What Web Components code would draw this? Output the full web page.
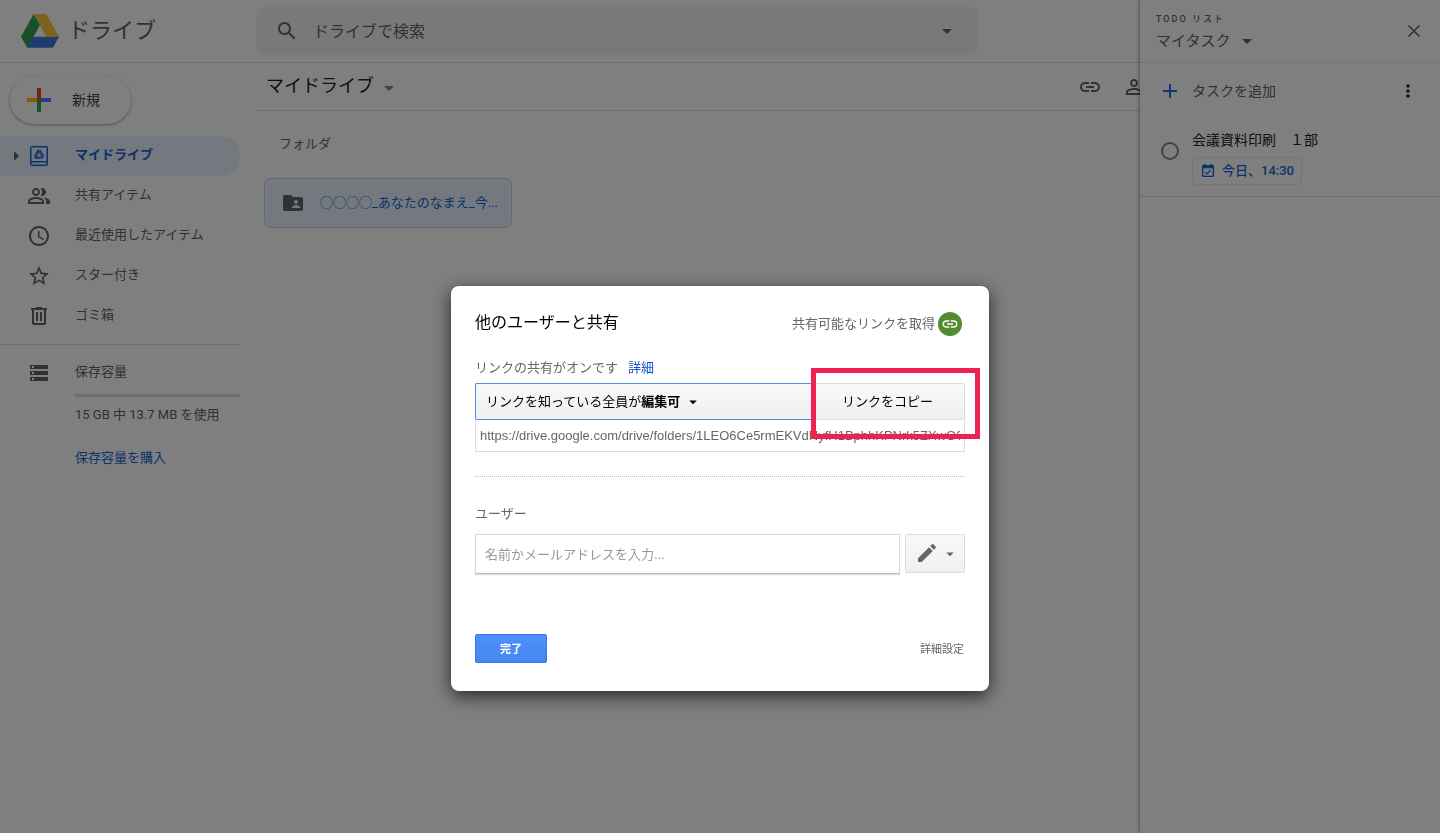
<!DOCTYPE html>
<html lang="ja">
<head>
<meta charset="utf-8">
<title>マイドライブ</title>
<style>
html, body { margin: 0; min-height: 100%; }
body { font-family: Roboto, "Noto Sans CJK JP", sans-serif; font-size: 13px; line-height: 20px; color: #5f6368; background: #fff; }
</style>
</head>
<body>
<drive-app></drive-app>
<script>
const RESET = `
  *, *::before, *::after { box-sizing: border-box; }
  :host { display: block; box-sizing: border-box; }
  button, input { font: inherit; color: inherit; background: none; border: 0; margin: 0; padding: 0; border-radius: 0; outline: 0; }
  button { cursor: pointer; }
  a { color: inherit; text-decoration: none; }
  h1, h2, h3, p, ul { margin: 0; padding: 0; font-size: inherit; font-weight: 400; list-style: none; }
`;

function define(name, html, setup) {
  const template = document.createElement('template');
  template.innerHTML = html.replace('<style>', '<style>' + RESET);
  customElements.define(name, class extends HTMLElement {
    constructor() {
      super();
      this.attachShadow({ mode: 'open' }).append(template.content.cloneNode(true));
      if (setup) setup(this.shadowRoot, this);
    }
  });
}

const ICONS = {
  search: '<path d="M15.5 14h-.79l-.28-.27C15.41 12.59 16 11.11 16 9.5 16 5.91 13.09 3 9.5 3S3 5.91 3 9.5 5.91 16 9.5 16c1.61 0 3.09-.59 4.23-1.57l.27.28v.79l5 4.99L20.49 19l-4.99-5zm-6 0C7.01 14 5 11.99 5 9.5S7.01 5 9.5 5 14 7.01 14 9.5 11.99 14 9.5 14z"/>',
  down: '<path d="M7 10l5 5 5-5z"/>',
  right: '<path d="M10 7l5 5-5 5z"/>',
  drive: '<path fill-rule="evenodd" d="M5 2h14a2 2 0 0 1 2 2v16a2 2 0 0 1-2 2H5a2 2 0 0 1-2-2V4a2 2 0 0 1 2-2zM4.500 3.500v13.500h15V3.500zM4.500 18.500v2h15v-2z"/><path fill-rule="evenodd" d="M10.400 5.800h3.200l3.600 6.400-1.600 2.800H8.400l-1.600-2.800zM12 8.600l-2.100 3.800h4.200z"/><path d="M11.700 6.200l4.300 7.400M10.600 8.600l-2.700 4.800M9.800 13.900h6" fill="none" stroke="#e8f0fe" stroke-width=".6"/>',
  people: '<path d="M16.500 13.130C17.970 14.140 19 15.500 19 17.300V20h4v-2.700c0-2.180-3.570-3.470-6.500-4.170zM15 12c2.210 0 4-1.790 4-4s-1.790-4-4-4c-.47 0-.91.100-1.330.240C14.500 5.270 15 6.580 15 8s-.5 2.730-1.330 3.760c.42.140.860.240 1.330.240zM9 12c2.210 0 4-1.790 4-4s-1.790-4-4-4-4 1.790-4 4 1.790 4 4 4zm0-6c1.100 0 2 .9 2 2s-.9 2-2 2-2-.9-2-2 .9-2 2-2zM9 13c-2.670 0-8 1.340-8 4v3h16v-3c0-2.660-5.330-4-8-4zm6 5H3v-.99C3.200 16.290 6.300 15 9 15s5.800 1.290 6 2v1z"/>',
  clock: '<path d="M11.990 2C6.470 2 2 6.480 2 12s4.470 10 9.990 10C17.520 22 22 17.520 22 12S17.520 2 11.990 2zM12 20c-4.420 0-8-3.580-8-8s3.580-8 8-8 8 3.580 8 8-3.580 8-8 8zm.5-13H11v6l5.250 3.150.75-1.230-4.500-2.670z"/>',
  star: '<path d="M22 9.240l-7.190-.62L12 2 9.190 8.630 2 9.240l5.460 4.730L5.820 21 12 17.270 18.180 21l-1.630-7.030L22 9.240zM12 15.400l-3.760 2.270 1-4.280-3.320-2.880 4.380-.38L12 6.100l1.710 4.040 4.380.38-3.320 2.880 1 4.280L12 15.400z"/>',
  trash: '<path d="M15 4V3H9v1H4v2h1v13c0 1.100.9 2 2 2h10c1.100 0 2-.9 2-2V6h1V4h-5zm2 15H7V6h10v13zM9 8h2v9H9zm4 0h2v9h-2z"/>',
  storage: '<path fill-rule="evenodd" d="M3 20h18v-4H3v4zm2-3h2v2H5v-2zM3 4v4h18V4H3zm4 3H5V5h2v2zm-4 7h18v-4H3v4zm2-3h2v2H5v-2z"/>',
  link: '<path d="M3.900 12c0-1.710 1.390-3.100 3.100-3.100h4V7H7c-2.760 0-5 2.240-5 5s2.240 5 5 5h4v-1.900H7c-1.710 0-3.100-1.390-3.100-3.100zM8 13h8v-2H8v2zm9-6h-4v1.900h4c1.710 0 3.100 1.390 3.100 3.100s-1.390 3.100-3.100 3.100h-4V17h4c2.760 0 5-2.240 5-5s-2.240-5-5-5z"/>',
  person: '<path d="M10 12c2.210 0 4-1.790 4-4s-1.790-4-4-4-4 1.790-4 4 1.790 4 4 4zm0-6c1.100 0 2 .9 2 2s-.9 2-2 2-2-.9-2-2 .9-2 2-2zM10 13c-2.670 0-8 1.340-8 4v3h16v-3c0-2.660-5.330-4-8-4zm6 5H4v-.99c.2-.72 3.300-2.010 6-2.010s5.800 1.290 6 2z"/>',
  folder: '<path d="M20 6h-8l-2-2H4c-1.100 0-1.990.9-1.990 2L2 18c0 1.100.9 2 2 2h16c1.100 0 2-.9 2-2V8c0-1.100-.9-2-2-2zm-5 3c1.100 0 2 .9 2 2s-.9 2-2 2-2-.9-2-2 .9-2 2-2zm4 8h-8v-1c0-1.330 2.670-2 4-2s4 .67 4 2v1z"/>',
  close: '<path d="M6.500 6.500l11 11M17.500 6.500l-11 11" stroke="currentColor" stroke-width="1.500"/>',
  add: '<path d="M19 13h-6v6h-2v-6H5v-2h6V5h2v6h6z"/>',
  more: '<path d="M12 8c1.100 0 2-.9 2-2s-.9-2-2-2-2 .9-2 2 .9 2 2 2zm0 2c-1.100 0-2 .9-2 2s.9 2 2 2 2-.9 2-2-.9-2-2-2zm0 6c-1.100 0-2 .9-2 2s.9 2 2 2 2-.9 2-2-.9-2-2-2z"/>',
  event: '<path d="M19 3h-1V1h-2v2H8V1H6v2H5c-1.110 0-2 .9-2 2v14c0 1.100.89 2 2 2h14c1.100 0 2-.9 2-2V5c0-1.100-.9-2-2-2zm0 16H5V8h14v11zM10.600 17.500l6-6-1.300-1.300-4.700 4.700-2.200-2.200-1.300 1.300z"/>',
  edit: '<path d="M3 17.250V21h3.750L17.810 9.940l-3.750-3.750L3 17.250zM20.710 7.040c.39-.39.39-1.020 0-1.410l-2.340-2.340c-.39-.39-1.020-.39-1.410 0l-1.830 1.830 3.750 3.750 1.830-1.830z"/>',
  plus: '<path fill="#ea4335" d="M10 0h4v12h-4z"/><path fill="#34a853" d="M10 12h4v12h-4z"/><path fill="#4285f4" d="M14 10h10v4H14z"/><path fill="#fbbc04" d="M0 10h10v4H0z"/><path fill="#ea4335" d="M10 10h4l-4 4z"/>'
};

define('ui-icon', `<style>
  :host { display: inline-block; flex: none; width: 24px; height: 24px; }
  svg { display: block; width: 100%; height: 100%; fill: currentColor; }
</style><svg viewBox="0 0 24 24" aria-hidden="true"></svg>`, (root, host) => {
  root.querySelector('svg').innerHTML = ICONS[host.getAttribute('name')] || '';
});

define('drive-header', `<style>
  :host { display: grid; grid-template-columns: 256px 1fr; align-items: center; height: 63px; border-bottom: 1px solid #dadce0; }
  .brand { display: flex; align-items: center; gap: 9px; padding-left: 21px; font-size: 22px; line-height: 32px; }
  .brand svg { display: block; width: 38px; height: 34px; }
  .search { display: flex; align-items: center; height: 48px; max-width: 722px; padding: 0 19px; gap: 14px; background: #f1f3f4; border-radius: 8px; }
  input { flex: 1; min-width: 0; padding-top: 2px; font-size: 16px; line-height: 24px; }
  input::placeholder { color: #5f6368; opacity: 1; }
  button { display: flex; }
</style>
<a class="brand" href="#">
  <svg viewBox="0 0 114 102" aria-hidden="true">
    <path fill="#2f9e53" d="M38 0l19 33-38 68L0 68z"/>
    <path fill="#f7c63c" d="M38 0h38l38 68H76z"/>
    <path fill="#3f78dc" d="M36 68h78L96 101H19z"/>
  </svg><span>ドライブ</span>
</a>
<form class="search" role="search">
  <ui-icon name="search"></ui-icon>
  <input type="text" aria-label="検索" placeholder="ドライブで検索">
  <button type="button" aria-label="検索オプション"><ui-icon name="down"></ui-icon></button>
</form>`);

define('nav-item', `<style>
  a { display: grid; grid-template-columns: 27px 48px 1fr; align-items: center; height: 40px; padding-bottom: 2px; border-radius: 0 20px 20px 0; }
  ui-icon { margin-top: 2px; }
  .arrow { visibility: hidden; margin-left: 4px; }
  :host([active]) a { background: #e8f0fe; color: #1967d2; font-weight: 700; }
  :host([active]) .arrow { visibility: visible; color: #5f6368; }
</style><a href="#"><ui-icon class="arrow" name="right"></ui-icon><span class="icon"></span><slot></slot></a>`, (root, host) => {
  const icon = document.createElement('template');
  icon.innerHTML = '<ui-icon name="' + host.getAttribute('icon') + '"></ui-icon>';
  root.querySelector('.icon').replaceWith(icon.content);
});

define('drive-sidebar', `<style>
  :host { padding-right: 16px; }
  .new { display: flex; align-items: center; gap: 21px; width: 121px; height: 48px; margin: 13px 0 12px 10px; padding-left: 17px; border-radius: 24px; background: #fff; color: #3c4043; font-size: 14px; box-shadow: 0 1px 2px rgba(60,64,67,.3), 0 1px 3px 1px rgba(60,64,67,.15); }
  .storage { margin-top: 8px; padding-top: 8px; border-top: 1px solid #dadce0; }
  .detail { padding-left: 75px; }
  .bar { height: 3px; background: #dadce0; margin: 1px 0 8px; }
  .detail a { display: inline-block; margin-top: 23px; color: #1967d2; }
</style>
<button class="new"><ui-icon name="plus"></ui-icon>新規</button>
<nav>
  <nav-item icon="drive" active>マイドライブ</nav-item>
  <nav-item icon="people">共有アイテム</nav-item>
  <nav-item icon="clock">最近使用したアイテム</nav-item>
  <nav-item icon="star">スター付き</nav-item>
  <nav-item icon="trash">ゴミ箱</nav-item>
</nav>
<section class="storage">
  <nav-item icon="storage">保存容量</nav-item>
  <div class="detail">
    <div class="bar"></div>
    <p>15 GB 中 13.7 MB を使用</p>
    <a href="#">保存容量を購入</a>
  </div>
</section>`);

define('folder-card', `<style>
  a { display: flex; align-items: center; gap: 15px; width: 248px; height: 50px; padding: 0 12px 0 16px; border: 1px solid #c6d4ec; border-radius: 6px; background: #e8f0fe; color: #1967d2; }
  ui-icon { color: #5f6368; }
  span { white-space: nowrap; overflow: hidden; }
</style><a href="#"><ui-icon name="folder"></ui-icon><span><slot></slot></span></a>`);

define('drive-files', `<style>
  :host { min-width: 0; overflow: hidden; }
  .bar { display: flex; justify-content: space-between; align-items: center; height: 48px; border-bottom: 1px solid #dadce0; }
  .title { display: flex; align-items: center; gap: 3px; padding: 0 0 2px 10px; font-size: 18px; line-height: 24px; color: #202124; }
  .title ui-icon { color: #80868b; margin-top: 4px; }
  .tools { display: flex; gap: 22px; margin-right: -8px; }
  .tools button { display: flex; }
  h2 { padding: 23px 0 0 23px; }
  .grid { display: flex; padding: 24px 8px; }
</style>
<div class="bar">
  <button class="title">マイドライブ<ui-icon name="down"></ui-icon></button>
  <div class="tools">
    <button aria-label="リンク"><ui-icon name="link"></ui-icon></button>
    <button aria-label="共有"><ui-icon name="person"></ui-icon></button>
  </div>
</div>
<h2>フォルダ</h2>
<div class="grid"><folder-card>◯◯◯◯_あなたのなまえ_今...</folder-card></div>`);

define('task-panel', `<style>
  :host { background: #fff; box-shadow: 0 0 4px rgba(0,0,0,.6); }
  header { display: flex; justify-content: space-between; align-items: center; height: 63px; padding: 0 14px 0 16px; border-bottom: 1px solid #e8eaed; }
  .kicker { padding-top: 2px; font-size: 9px; line-height: 16px; font-weight: 500; letter-spacing: 2px; }
  button { display: flex; align-items: center; }
  .list { gap: 5px; padding-top: 2px; font-size: 15px; line-height: 24px; }
  .row { display: flex; justify-content: space-between; align-items: center; height: 56px; padding: 0 22px 0 18px; font-size: 14px; }
  .row .add { gap: 10px; }
  .add ui-icon { color: #1a73e8; }
  .more { color: #202124; }
  .more ui-icon { width: 20px; height: 20px; }
  .task { display: flex; gap: 13px; padding: 11px 21px; border-bottom: 1px solid #dadce0; }
  input { appearance: none; flex: none; width: 18px; height: 18px; margin-top: 12px; border: 2px solid #80868b; border-radius: 50%; }
  label { display: block; font-size: 14px; line-height: 20px; padding-bottom: 2px; color: #202124; }
  .chip { gap: 6px; height: 28px; margin-top: 5px; padding: 0 7px; border: 1px solid #e8eaed; border-radius: 4px; color: #1967d2; font-weight: 500; }
  .chip ui-icon { width: 16px; height: 16px; }
</style>
<header>
  <div>
    <h2 class="kicker">TODO リスト</h2>
    <button class="list">マイタスク<ui-icon name="down"></ui-icon></button>
  </div>
  <button aria-label="閉じる"><ui-icon name="close"></ui-icon></button>
</header>
<div class="row">
  <button class="add"><ui-icon name="add"></ui-icon>タスクを追加</button>
  <button class="more" aria-label="その他"><ui-icon name="more"></ui-icon></button>
</div>
<div class="task">
  <input type="checkbox" id="done">
  <div>
    <label for="done">会議資料印刷　１部</label>
    <button class="chip"><ui-icon name="event"></ui-icon>今日、14:30</button>
  </div>
</div>`);

define('share-dialog', `<style>
  :host { width: 538px; height: max-content; max-width: 100%; padding: 24px; border-radius: 8px; background: #fff; color: #666; box-shadow: 0 5px 18px rgba(0,0,0,.7); font-family: "Liberation Sans", "Noto Sans CJK JP", sans-serif; }
  .head { display: flex; justify-content: space-between; align-items: center; height: 28px; padding-right: 3px; }
  h1 { padding-bottom: 2px; font-size: 16px; line-height: 24px; color: #000; }
  .get { display: flex; align-items: center; gap: 3px; }
  .badge { display: flex; align-items: center; justify-content: center; width: 24px; height: 24px; border-radius: 50%; background: #558b2f; color: #fff; }
  .badge ui-icon { width: 18px; height: 18px; }
  .state { display: flex; gap: 10px; margin-top: 20px; padding-bottom: 5px; }
  .state a { color: #15c; }
  .access { display: flex; }
  .access button { height: 37px; background: linear-gradient(#f8f8f8, #f0f0f0); border: 1px solid #dcdcdc; color: #000; }
  .access .who { flex: 1; display: flex; align-items: center; padding-left: 10px; border-color: #4d90e0; border-right: 0; border-radius: 2px 0 0 2px; }
  .who ui-icon { width: 18px; height: 18px; margin-left: 4px; }
  .copy { position: relative; width: 154px; }
  .copy button { width: 100%; border-left: 0; border-radius: 0 2px 2px 0; }
  .marker { position: absolute; inset: -15px -15px -19px 0; border: 5px solid #ee2150; pointer-events: none; }
  .url { display: block; width: 100%; height: 32px; padding: 0 4px; border: 1px solid #dcdcdc; border-top: 0; }
  .people { margin-top: 24px; padding-top: 27px; border-top: 1px dotted #bbb; }
  .people label { display: block; }
  .add { display: flex; gap: 5px; margin-top: 10px; }
  .add input { flex: 1; min-width: 0; height: 40px; padding: 0 9px; border: 1px solid #d9d9d9; border-bottom-color: #bbb; box-shadow: 0 1px 1px #ddd; }
  .add input::placeholder { color: #999; opacity: 1; }
  .add button { display: flex; align-items: center; gap: 2px; width: 60px; height: 39px; padding-left: 9px; border: 1px solid #dcdcdc; border-radius: 2px; background: linear-gradient(#f8f8f8, #f0f0f0); }
  .add ui-icon { margin-bottom: 2px; }
  .add ui-icon + ui-icon { width: 18px; height: 18px; margin: 0; }
  .foot { display: flex; justify-content: space-between; align-items: center; margin-top: 60px; padding-bottom: 4px; font-size: 11px; }
  .foot a { padding-right: 1px; }
  .done { width: 72px; height: 29px; border: 1px solid #3079ed; border-radius: 2px; background: linear-gradient(#4d90fe, #4787ed); color: #fff; font-weight: 700; }
</style>
<div class="head">
  <h1>他のユーザーと共有</h1>
  <a class="get" href="#">共有可能なリンクを取得<span class="badge"><ui-icon name="link"></ui-icon></span></a>
</div>
<div class="state"><span>リンクの共有がオンです</span><a href="#">詳細</a></div>
<div class="access">
  <button class="who" aria-haspopup="listbox"><span>リンクを知っている全員が<b>編集可</b></span><ui-icon name="down"></ui-icon></button>
  <div class="copy"><button>リンクをコピー</button><div class="marker"></div></div>
</div>
<input class="url" type="text" readonly aria-label="共有リンク" value="https://drive.google.com/drive/folders/1LEO6Ce5rmEKVdNyfH1BphhKPNrk5ZXwO?">
<div class="people">
  <label for="who">ユーザー</label>
  <div class="add">
    <input id="who" type="text" placeholder="名前かメールアドレスを入力...">
    <button aria-label="権限"><ui-icon name="edit"></ui-icon><ui-icon name="down"></ui-icon></button>
  </div>
</div>
<div class="foot"><button class="done">完了</button><a href="#">詳細設定</a></div>`);

define('drive-app', `<style>
  :host { min-height: 100vh; }
  .page { display: grid; grid-template-columns: 1fr 300px; min-height: 100vh; }
  .left { min-width: 0; }
  .body { display: grid; grid-template-columns: 256px 1fr; }
  .scrim { position: fixed; inset: 0; z-index: 1; display: flex; justify-content: center; align-items: flex-start; padding-top: 286px; overflow: auto; background: rgba(0,0,0,.5); }
</style>
<div class="page">
  <div class="left">
    <drive-header></drive-header>
    <div class="body"><drive-sidebar></drive-sidebar><drive-files></drive-files></div>
  </div>
  <task-panel></task-panel>
</div>
<div class="scrim"><share-dialog role="dialog" aria-modal="true" aria-label="他のユーザーと共有"></share-dialog></div>`);
</script>
</body>
</html>
